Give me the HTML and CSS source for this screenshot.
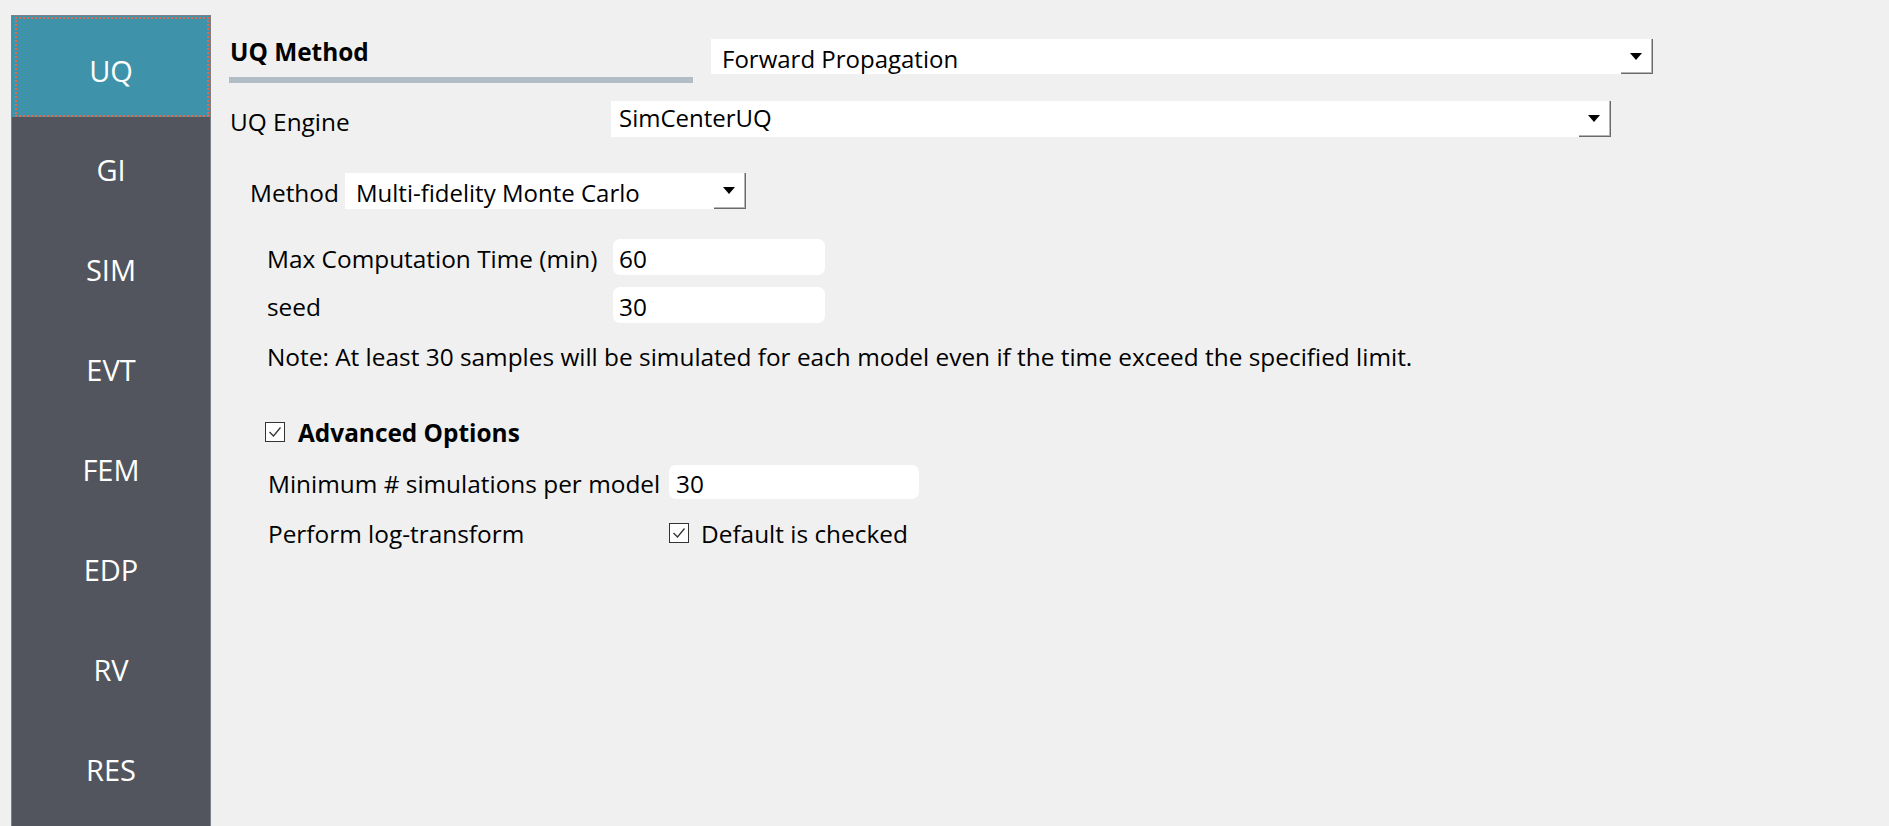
FILE: index.html
```html
<!DOCTYPE html>
<html lang="en">
<head>
<meta charset="utf-8">
<title>UQ</title>
<link rel="stylesheet" href="styles.css">
</head>
<body>
<nav class="sidebar">
  <div class="nav-item active">UQ</div>
  <div class="nav-item">GI</div>
  <div class="nav-item">SIM</div>
  <div class="nav-item">EVT</div>
  <div class="nav-item">FEM</div>
  <div class="nav-item">EDP</div>
  <div class="nav-item">RV</div>
  <div class="nav-item">RES</div>
</nav>
<main class="main">
  <div class="top-row">
    <div class="section-title">UQ Method</div>
    <div class="combo combo-type">
      <span class="combo-text">Forward Propagation</span>
      <span class="combo-btn"><i class="arrow"></i></span>
    </div>
  </div>
  <div class="engine-row">
    <div class="label engine-label">UQ Engine</div>
    <div class="combo combo-engine">
      <span class="combo-text">SimCenterUQ</span>
      <span class="combo-btn"><i class="arrow"></i></span>
    </div>
  </div>
  <div class="method-row">
    <div class="label method-label">Method</div>
    <div class="combo combo-method">
      <span class="combo-text">Multi-fidelity Monte Carlo</span>
      <span class="combo-btn"><i class="arrow"></i></span>
    </div>
  </div>
  <div class="params">
    <div class="param-row">
      <div class="label param-label">Max Computation Time (min)</div>
      <div class="field">60</div>
    </div>
    <div class="param-row second">
      <div class="label param-label">seed</div>
      <div class="field">30</div>
    </div>
    <p class="note">Note: At least 30 samples will be simulated for each model even if the time exceed the specified limit.</p>
  </div>
  <div class="advanced">
    <div class="adv-header">
      <span class="checkbox"><svg viewBox="0 0 20 20" width="20" height="20"><polyline points="4.5,10 8.5,14 15.5,5.5" fill="none" stroke="#333" stroke-width="1.3"/></svg></span>
      <span class="adv-title">Advanced Options</span>
    </div>
    <div class="adv-row">
      <div class="label adv-label">Minimum # simulations per model</div>
      <div class="field field-min">30</div>
    </div>
    <div class="adv-row log-row">
      <div class="label adv-label">Perform log-transform</div>
      <div class="check-label">
        <span class="checkbox"><svg viewBox="0 0 20 20" width="20" height="20"><polyline points="4.5,10 8.5,14 15.5,5.5" fill="none" stroke="#333" stroke-width="1.3"/></svg></span>
        <span>Default is checked</span>
      </div>
    </div>
  </div>
</main>
</body>
</html>
```

FILE: styles.css
```css
* { box-sizing: border-box; }

html, body {
  margin: 0;
  height: 100%;
}

body {
  display: flex;
  background: #f0f0f0;
  font-family: "Open Sans", "Noto Sans", sans-serif;
  font-size: 24.4px;
  color: #000;
  overflow: hidden;
}

.sidebar {
  margin: 15px 0 0 11px;
  width: 200px;
  flex: none;
  border: 1px solid #7d8087;
  border-bottom: 0;
  background: #52555d;
  display: flex;
  flex-direction: column;
}

.nav-item {
  height: 100px;
  flex: none;
  display: flex;
  align-items: center;
  justify-content: center;
  padding-top: 6px;
  color: #fff;
  font-size: 29px;
  line-height: 1.2;
}

.nav-item.active {
  position: relative;
  height: 101px;
  padding-top: 10px;
  background: #3e93aa;
}

.nav-item.active::after {
  content: "";
  position: absolute;
  top: 1px;
  left: 3px;
  right: 1px;
  bottom: 0;
  border: 2px dotted #dd6b4d;
}

.main {
  flex: 1;
  padding: 30px 0 0 18px;
  line-height: 34px;
}

.label { flex: none; }

/* top row */
.top-row {
  display: flex;
  align-items: flex-start;
  height: 53px;
}

.section-title {
  width: 464px;
  height: 53px;
  padding: 5px 0 0 1px;
  border-bottom: 6px solid #b1bec6;
  font-weight: 700;
  flex: none;
}

.combo {
  position: relative;
  display: flex;
  background: #fff;
  overflow: hidden;
  flex: none;
  font-size: 24px;
}

.combo-text {
  flex: 1;
  padding-left: 11px;
  white-space: nowrap;
}

.combo-btn {
  width: 32px;
  flex: none;
  display: flex;
  align-items: center;
  justify-content: center;
  box-shadow: inset -1px -1px 0 #6a6a6a, inset -2px -2px 0 #b4b4b4;
}

.arrow {
  display: block;
  width: 0;
  height: 0;
  margin: 0 2px 1px 0;
  border-left: 6px solid transparent;
  border-right: 6px solid transparent;
  border-top: 7px solid #000;
}

.combo-type {
  margin: 9px 0 0 18px;
  width: 942px;
  height: 35px;
}
.combo-type .combo-text { padding-top: 3px; }

/* engine row */
.engine-row {
  display: flex;
  align-items: flex-start;
  height: 36px;
  margin-top: 18px;
}

.engine-label {
  width: 382px;
  padding: 4px 0 0 1px;
}

.combo-engine {
  width: 1000px;
  height: 36px;
}
.combo-engine .combo-text { padding-left: 8px; }

/* method row */
.method-row {
  display: flex;
  align-items: flex-start;
  height: 36px;
  margin-top: 36px;
  padding-left: 21px;
}

.method-label {
  width: 95px;
  padding-top: 3px;
}

.combo-method {
  width: 401px;
  height: 36px;
}
.combo-method .combo-text { padding-top: 3px; }

/* params */
.params {
  padding-left: 38px;
}

.param-row {
  display: flex;
  align-items: flex-start;
  height: 36px;
  margin-top: 30px;
}
.param-row.second { margin-top: 12px; }

.param-label {
  width: 346px;
  padding-top: 3px;
}

.field {
  background: #fff;
  border-radius: 7px;
  width: 212px;
  height: 36px;
  padding: 3px 0 0 6px;
  flex: none;
}

.note {
  margin: 17px 0 0;
  height: 34px;
  white-space: nowrap;
}

/* advanced */
.advanced {
  padding-left: 36px;
}

.adv-header {
  display: flex;
  align-items: flex-start;
  height: 34px;
  margin-top: 42px;
}

.checkbox {
  width: 20px;
  height: 20px;
  flex: none;
  margin-top: 6px;
  background: #fff;
  border: 1px solid #333;
  display: flex;
}
.checkbox svg { display: block; margin: -1px; }

.adv-title {
  margin-left: 13px;
  font-weight: 700;
}

.adv-row {
  display: flex;
  align-items: flex-start;
  height: 34px;
  margin-top: 15px;
}

.adv-label {
  width: 404px;
  padding: 2px 0 0 3px;
}

.field-min {
  width: 250px;
  height: 34px;
  padding: 2px 0 0 7px;
}

.log-row { margin-top: 18px; }
.log-row .adv-label { padding-top: 0; }

.check-label {
  display: flex;
  align-items: flex-start;
  gap: 12px;
}
```
